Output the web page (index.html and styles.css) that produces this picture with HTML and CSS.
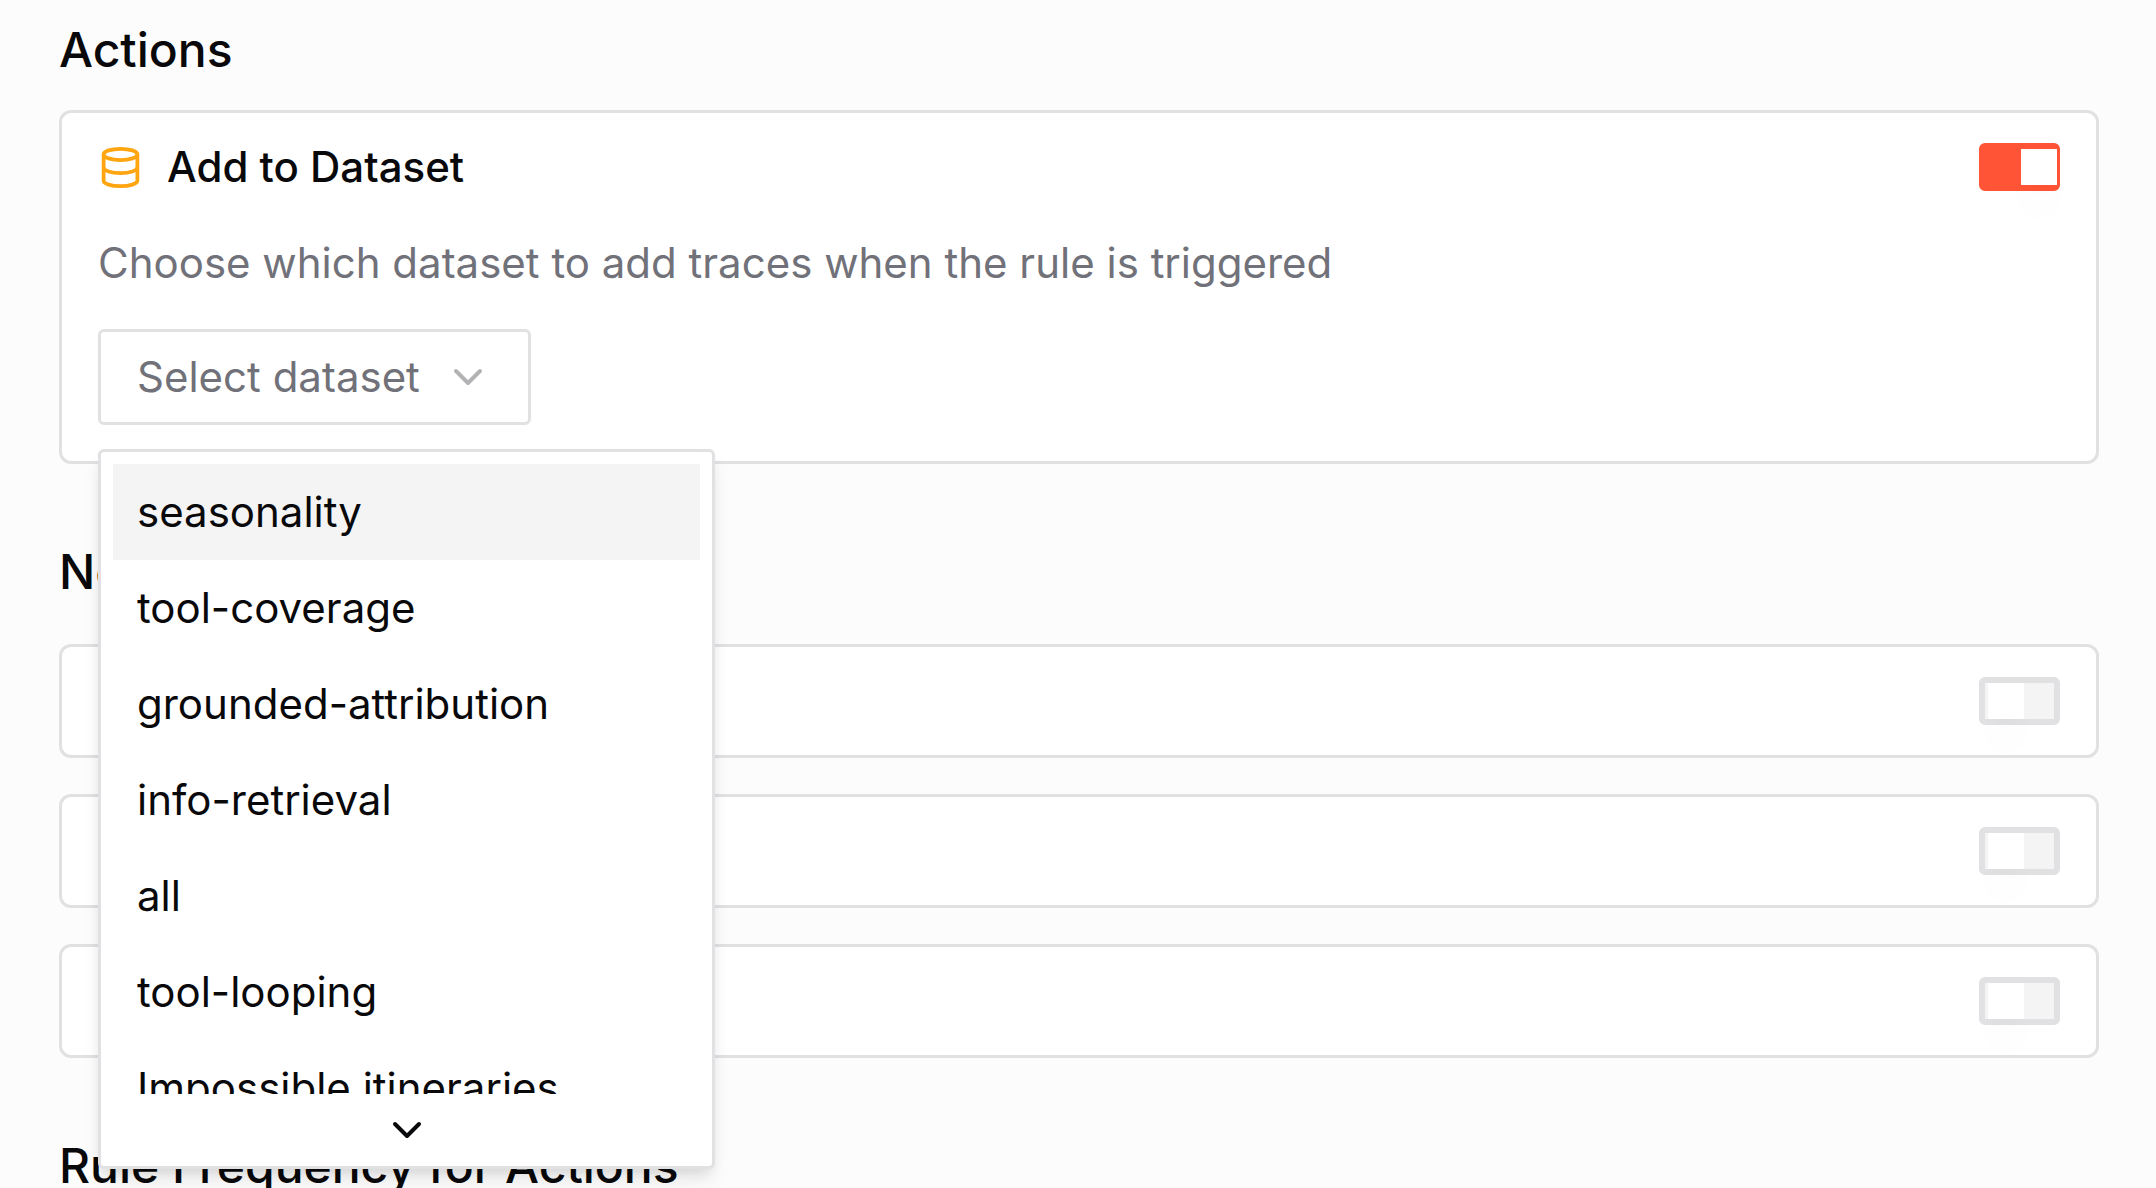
FILE: index.html
```
<!DOCTYPE html>
<html lang="en">
<head>
    <meta charset="UTF-8">
    <meta name="viewport" content="width=device-width, initial-scale=1.0">
    <title>Actions</title>
    <link rel="stylesheet" href="styles.css">
</head>
<body>
    <main class="rule-form">
        <section class="section">
            <h2>Actions</h2>
            <div class="card action-card">
                <div class="card-row">
                    <label class="card-title" for="addToDataset">
                        <svg class="icon-database" viewBox="0 0 24 24">
                            <ellipse cx="12" cy="5" rx="9" ry="3"/>
                            <path d="M3 5v14a9 3 0 0 0 18 0V5"/>
                            <path d="M3 12a9 3 0 0 0 18 0"/>
                        </svg>
                        Add to Dataset
                    </label>
                    <input class="switch" type="checkbox" role="switch" id="addToDataset" checked>
                </div>
                <p class="description">Choose which dataset to add traces when the rule is triggered</p>
                <div class="dropdown">
                    <button class="dropdown-trigger" type="button" aria-haspopup="listbox" aria-expanded="true">
                        Select dataset
                        <svg class="icon-chevron" viewBox="0 0 24 24"><path d="m6 9 6 6 6-6"/></svg>
                    </button>
                    <div class="dropdown-menu">
                        <div class="options" role="listbox" aria-label="Dataset">
                            <button class="option active" type="button" role="option">seasonality</button>
                            <button class="option" type="button" role="option">tool-coverage</button>
                            <button class="option" type="button" role="option">grounded-attribution</button>
                            <button class="option" type="button" role="option">info-retrieval</button>
                            <button class="option" type="button" role="option">all</button>
                            <button class="option" type="button" role="option">tool-looping</button>
                            <button class="option" type="button" role="option">Impossible itineraries</button>
                        </div>
                        <button class="scroll-down" type="button" aria-label="Scroll down">
                            <svg class="icon-chevron" viewBox="0 0 24 24"><path d="m6 9 6 6 6-6"/></svg>
                        </button>
                    </div>
                </div>
            </div>
        </section>

        <section class="section section-wide">
            <h2>Notifications</h2>
            <div class="card card-row">
                <input class="switch" type="checkbox" role="switch" aria-label="First notification">
            </div>
            <div class="card card-row">
                <input class="switch" type="checkbox" role="switch" aria-label="Second notification">
            </div>
            <div class="card card-row">
                <input class="switch" type="checkbox" role="switch" aria-label="Third notification">
            </div>
        </section>

        <section class="section">
            <h2>Rule Frequency for Actions</h2>
        </section>
    </main>
</body>
</html>
```
FILE: styles.css
```
* {
    margin: 0;
    padding: 0;
    box-sizing: border-box;
}

html,
body {
    height: 100%;
    overflow: hidden;
}

body {
    background: #fcfcfc;
    color: #09090b;
    font-family: Inter, 'Liberation Sans', sans-serif;
    font-size: 42px;
    line-height: 60px;
}

button {
    border: none;
    background: none;
    color: inherit;
    font: inherit;
    text-align: left;
    cursor: pointer;
}

svg {
    flex-shrink: 0;
    fill: none;
    stroke: currentColor;
    stroke-width: 2;
    stroke-linecap: round;
    stroke-linejoin: round;
}

.rule-form {
    display: flex;
    flex-direction: column;
    gap: 72px;
    padding: 14px 57px 0 59px;
}

.section {
    display: flex;
    flex-direction: column;
    gap: 24px;
}

.section-wide {
    gap: 36px;
}

h2 {
    font-size: 48px;
    font-weight: 500;
    line-height: 72px;
}

.card {
    padding: 30px 36px;
    background: white;
    border: 3px solid #e1e1e3;
    border-radius: 12px;
}

.action-card {
    padding-bottom: 36px;
}

.card-row {
    display: flex;
    align-items: center;
}

.card-title {
    display: flex;
    align-items: center;
    gap: 24px;
    font-weight: 500;
    line-height: 48px;
}

.icon-database {
    width: 45px;
    height: 45px;
    color: #ffa50f;
}

/* toggle switch */
.switch {
    appearance: none;
    flex-shrink: 0;
    width: 81px;
    height: 48px;
    margin-left: auto;
    padding-left: 3px;
    background: #f4f4f5;
    border: 6px solid #e1e1e3;
    border-radius: 6px;
    cursor: pointer;
}

.switch::before {
    content: '';
    display: block;
    width: 36px;
    height: 36px;
    background: white;
    box-shadow: 0 30px 45px -9px rgba(0, 0, 0, 0.06), 0 12px 18px -12px rgba(0, 0, 0, 0.06);
}

.switch:checked {
    padding-left: 36px;
    background: #ff5436;
    border-color: #ff5436;
}

.description {
    margin: 42px 0 36px;
    color: #71717a;
}

.dropdown {
    position: relative;
    width: fit-content;
}

.dropdown-trigger {
    display: flex;
    align-items: center;
    gap: 24px;
    height: 96px;
    padding: 0 36px;
    border: 3px solid #e1e1e3;
    border-radius: 6px;
    color: #71717a;
}

.icon-chevron {
    width: 48px;
    height: 48px;
}

.dropdown-trigger .icon-chevron {
    color: #b3b3b5;
}

.dropdown-menu {
    position: absolute;
    top: calc(100% + 24px);
    left: 0;
    width: 617px;
    padding: 12px;
    background: white;
    border: 3px solid #e1e1e3;
    border-radius: 6px;
    box-shadow: 0 12px 18px -3px rgba(0, 0, 0, 0.1), 0 6px 12px -6px rgba(0, 0, 0, 0.1);
}

.options {
    height: 630px;
    overflow: hidden;
}

.option {
    display: block;
    width: 100%;
    height: 96px;
    padding: 0 24px;
}

.option.active {
    background: #f4f4f5;
}

.scroll-down {
    display: flex;
    justify-content: center;
    align-items: flex-end;
    width: 100%;
    height: 60px;
}
```
